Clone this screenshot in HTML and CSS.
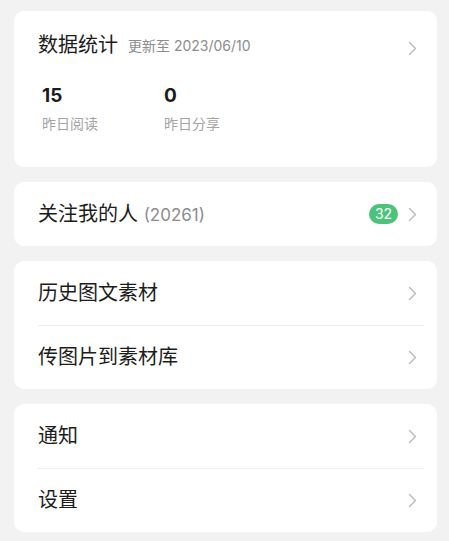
FILE: index.html
```html
<!DOCTYPE html>
<html lang="zh-CN">
<head>
    <meta charset="UTF-8">
    <meta name="viewport" content="width=device-width, initial-scale=1.0">
    <title>公众号助手</title>
    <link rel="stylesheet" href="styles.css">
</head>
<body>
    <main class="page">
        <!-- 数据统计 -->
        <section class="card stats-card">
            <div class="stats-head">
                <span class="title">数据统计</span>
                <span class="updated">更新至 2023/06/10</span>
                <svg class="chevron chevron-low" viewBox="0 0 9 15"><polyline points="1.5,1.5 7.5,7.5 1.5,13.5"/></svg>
            </div>
            <div class="stats">
                <div class="stat">
                    <div class="num">15</div>
                    <div class="label">昨日阅读</div>
                </div>
                <div class="stat">
                    <div class="num">0</div>
                    <div class="label">昨日分享</div>
                </div>
            </div>
        </section>

        <section class="card">
            <div class="row">
                <span class="title">关注我的人 <span class="count">(20261)</span></span>
                <span class="badge">32</span>
                <svg class="chevron" viewBox="0 0 9 15"><polyline points="1.5,1.5 7.5,7.5 1.5,13.5"/></svg>
            </div>
        </section>

        <section class="card">
            <div class="row">
                <span class="title">历史图文素材</span>
                <svg class="chevron" viewBox="0 0 9 15"><polyline points="1.5,1.5 7.5,7.5 1.5,13.5"/></svg>
            </div>
            <div class="divider"></div>
            <div class="row">
                <span class="title">传图片到素材库</span>
                <svg class="chevron" viewBox="0 0 9 15"><polyline points="1.5,1.5 7.5,7.5 1.5,13.5"/></svg>
            </div>
        </section>

        <section class="card">
            <div class="row">
                <span class="title">通知</span>
                <svg class="chevron" viewBox="0 0 9 15"><polyline points="1.5,1.5 7.5,7.5 1.5,13.5"/></svg>
            </div>
            <div class="divider"></div>
            <div class="row">
                <span class="title">设置</span>
                <svg class="chevron" viewBox="0 0 9 15"><polyline points="1.5,1.5 7.5,7.5 1.5,13.5"/></svg>
            </div>
        </section>
    </main>
</body>
</html>
```

FILE: styles.css
```css
/* Page */
body {
    margin: 0;
    background-color: #f2f2f2;
    font-family: "Inter", "Noto Sans CJK SC", sans-serif;
    color: #1c1c1c;
}

.page {
    display: flex;
    flex-direction: column;
    gap: 15px;
    padding: 11px 12px 0 14px;
}

.card {
    background-color: #fff;
    border-radius: 10px;
}

.title {
    font-size: 20px;
    line-height: 24px;
    white-space: nowrap;
}

.chevron {
    width: 9px;
    height: 15px;
    margin-left: auto;
    flex-shrink: 0;
}
.chevron polyline {
    fill: none;
    stroke: #bdbdbd;
    stroke-width: 1.5;
    stroke-linecap: round;
    stroke-linejoin: round;
}

/* Stats card */
.stats-card {
    padding: 22px 20px 33px 24px;
}

.stats-head {
    display: flex;
    align-items: center;
    height: 24px;
}

.stats-head .updated {
    font-size: 14px;
    color: #8c8c8c;
    margin-left: 10px;
}

.chevron-low {
    margin-top: 6px;
}

.stats {
    display: flex;
    margin-top: 28px;
    padding-left: 4px;
}

.stat {
    width: 122px;
}

.stat .num {
    font-size: 19px;
    font-weight: 700;
    line-height: 22px;
}

.stat .label {
    font-size: 14px;
    line-height: 20px;
    color: #a3a3a3;
    margin-top: 7px;
}

/* List rows */
.row {
    display: flex;
    align-items: center;
    height: 64px;
    padding: 0 20px 0 24px;
}

.count {
    font-size: 17px;
    color: #8c8c8c;
}

.badge {
    margin-left: auto;
    margin-right: 10px;
    min-width: 29px;
    height: 20px;
    border-radius: 10px;
    background-color: #4cc37a;
    color: #fff;
    font-size: 14px;
    line-height: 20px;
    text-align: center;
}
.badge + .chevron {
    margin-left: 0;
}

.divider {
    height: 1px;
    margin: 0 13px -1px 24px;
    background-color: #ededed;
}
```
